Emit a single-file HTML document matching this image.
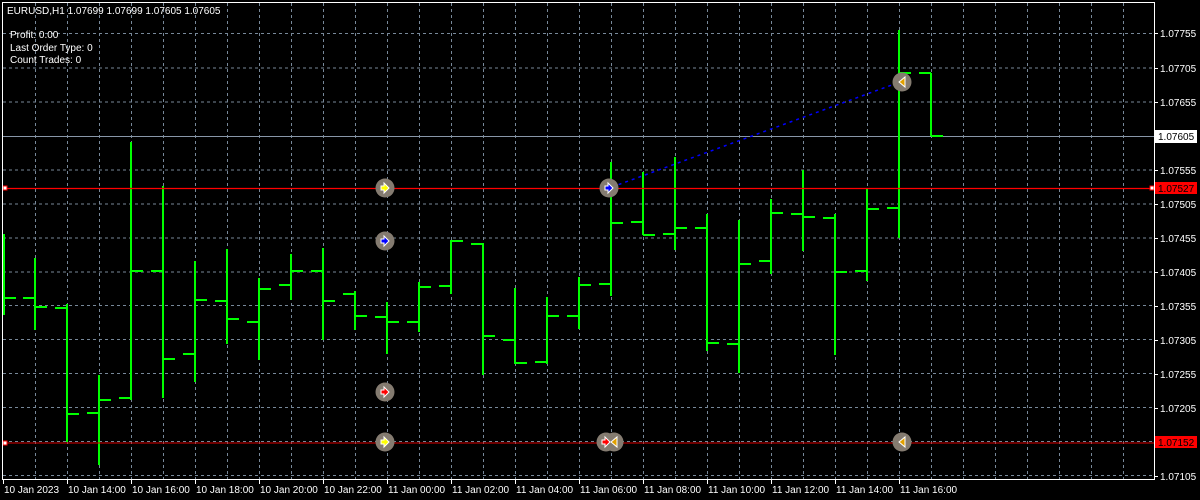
<!DOCTYPE html>
<html><head><meta charset="utf-8"><style>
html,body{margin:0;padding:0;background:#000;width:1200px;height:500px;overflow:hidden}
svg{display:block}
text{font-family:"Liberation Sans",sans-serif;font-size:10px;fill:#fff}
</style></head><body>
<svg width="1200" height="500" xmlns="http://www.w3.org/2000/svg">
<rect width="1200" height="500" fill="#000"/>
<g stroke="#778899" stroke-width="1" stroke-dasharray="3,3" id="grid"></g>
<g id="all"></g>
<script>
var ns="http://www.w3.org/2000/svg";
function el(t,a,p){var e=document.createElementNS(ns,t);for(var k in a)e.setAttribute(k,a[k]);(p||document.getElementById('all')).appendChild(e);return e;}
var g=document.getElementById('grid');
for(var x=35;x<1154;x+=32) el('line',{x1:x+.5,y1:3,x2:x+.5,y2:479},g);
var ys=[33.5,68,102,170,204,238,272,305.5,339.5,373.5,407.5,441.5,475.5];
ys.forEach(function(y){el('line',{x1:3,y1:y,x2:1154,y2:y},g);});
el('line',{x1:3,y1:136.5,x2:1154,y2:136.5,stroke:'#8896a8','stroke-width':1});
var bars=[[4,234,315,null,298],[35,258,330,298,307],[67,304,442,308,414],[99,375,465,413,400],[131,142,400,398,271],[163,186,398,271,359],[195,261,382,354,300],[227,249,344,301,319],[259,278,360,322,289],[291,254,300,285,271],[323,248,340,271,301],[355,291,330,294,316],[387,302,354,317,322],[419,282,332,322,287],[451,240,294,286,241],[483,243,375,244,336],[515,288,364,340,363],[547,297,364,362,316],[579,277,329,316,285],[611,162,296,284,223],[643,172,235,222,235],[675,157,250,234,228],[707,214,351,228,343],[739,220,373,344,264],[771,199,274,261,213],[803,170,251,214,217],[835,214,355,218,272],[867,188,281,271,209],[899,30,238,208,73],[931,73,136,73,136]];
bars.forEach(function(b){var x=b[0];
el('rect',{x:x-1,y:b[1],width:2,height:b[2]-b[1],fill:'#00ff00'});
if(b[3]!=null)el('rect',{x:x-12,y:b[3]-1,width:12,height:2,fill:'#00ff00'});
el('rect',{x:x,y:b[4]-1,width:12,height:2,fill:'#00ff00'});});
el('line',{x1:612,y1:187,x2:900,y2:82,stroke:'#0000ff','stroke-width':1.5,'stroke-dasharray':'3,4'});
el('line',{x1:3,y1:188.5,x2:1154,y2:188.5,stroke:'#ff0000','stroke-width':1.2});
el('line',{x1:3,y1:443,x2:1154,y2:443,stroke:'#dd0000','stroke-width':1});
el('rect',{x:3,y:186,width:4,height:4,fill:'#fff',stroke:'#f00'});
el('rect',{x:3,y:441,width:4,height:4,fill:'#fff',stroke:'#f00'});
el('rect',{x:1150,y:186,width:4,height:4,fill:'#fff',stroke:'#f00'});
function circ(x,y){el('circle',{cx:x,cy:y,r:9.5,fill:'#847b70'});}
function arr(x,y,c,dir){
var p=dir>0?'M'+(x-4)+' '+(y-2)+'h3v-3l5 5l-5 5v-3h-3z':'M'+(x+3)+' '+(y-5)+'v10l-6-5z';
el('path',{d:p,fill:c,stroke:'#fff','stroke-width':1});}
function mark(x,y,c,dir){circ(x,y);arr(x,y,c,dir);}
mark(385,188,'#ffff00',1);mark(385,241,'#0000ff',1);mark(385,392,'#ff0000',1);mark(385,442,'#ffff00',1);
mark(609,188,'#0000ff',1);
circ(606,442);circ(614,442);arr(614,442,'#e0a000',-1);arr(606,442,'#ff0000',1);
mark(902,82,'#e0a000',-1);mark(902,442,'#e0a000',-1);
el('path',{d:'M2.5 3V479.5H1154.5V3',fill:'none',stroke:'#fff','stroke-width':1});
el('line',{x1:2,y1:2.5,x2:1155,y2:2.5,stroke:'#fff','stroke-width':1});
var pl=[[33,'1.07755'],[68,'1.07705'],[102,'1.07655'],[170,'1.07555'],[204,'1.07505'],[238,'1.07455'],[272,'1.07405'],[306,'1.07355'],[340,'1.07305'],[374,'1.07255'],[408,'1.07205'],[476,'1.07105']];
pl.forEach(function(p){el('line',{x1:1154,y1:p[0]+.5,x2:1158,y2:p[0]+.5,stroke:'#fff'});var t=el('text',{x:1160,y:p[0]+4});t.textContent=p[1];});
el('rect',{x:1155,y:130,width:42,height:13,fill:'#fff'});
var t=el('text',{x:1158,y:140,style:'fill:#000'});t.textContent='1.07605';
el('rect',{x:1155,y:182,width:42,height:12,fill:'#ff0000'});
t=el('text',{x:1158,y:192,style:'fill:#000'});t.textContent='1.07527';
el('rect',{x:1155,y:436,width:42,height:12,fill:'#ff0000'});
t=el('text',{x:1158,y:446,style:'fill:#000'});t.textContent='1.07152';
var tl=['10 Jan 2023','10 Jan 14:00','10 Jan 16:00','10 Jan 18:00','10 Jan 20:00','10 Jan 22:00','11 Jan 00:00','11 Jan 02:00','11 Jan 04:00','11 Jan 06:00','11 Jan 08:00','11 Jan 10:00','11 Jan 12:00','11 Jan 14:00','11 Jan 16:00'];
tl.forEach(function(s,i){var x=3+64*i;el('line',{x1:x+.5,y1:479,x2:x+.5,y2:484,stroke:'#fff'});var t=el('text',{x:x+1,y:493});t.textContent=s;});
t=el('text',{x:7,y:14});t.textContent='EURUSD,H1  1.07699 1.07699 1.07605 1.07605';
t=el('text',{x:10,y:38});t.textContent='Profit: 0.00';
t=el('text',{x:10,y:51});t.textContent='Last Order Type: 0';
t=el('text',{x:10,y:63});t.textContent='Count Trades: 0';
</script>
</svg>
</body></html>
